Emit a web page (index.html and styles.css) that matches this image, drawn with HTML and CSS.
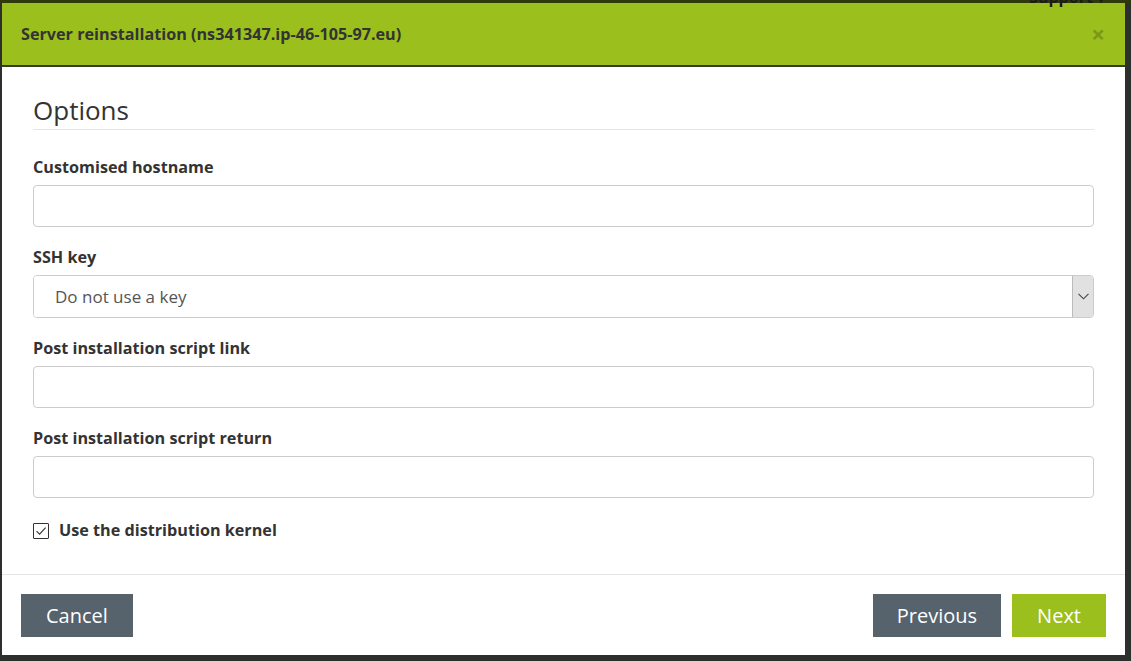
FILE: index.html
```html
<!DOCTYPE html>
<html lang="en">
<head>
<meta charset="utf-8">
<title>Server reinstallation</title>
<link rel="stylesheet" href="styles.css">
</head>
<body>
<div class="topstrip"><span class="support">Support &#9662;</span></div>
<div class="modal">
  <div class="modal-header">
    <h4 class="modal-title">Server reinstallation (ns341347.ip-46-105-97.eu)</h4>
    <span class="close">&times;</span>
  </div>
  <div class="modal-body">
    <h3 class="section-title">Options</h3>
    <div class="form-group">
      <label class="label">Customised hostname</label>
      <input class="input" type="text">
    </div>
    <div class="form-group">
      <label class="label">SSH key</label>
      <div class="select-wrap">
        <select class="select"><option>Do not use a key</option></select>
        <span class="select-arrow">
          <svg width="11" height="7" viewBox="0 0 11 7"><path d="M0.5 0.8 L5.5 5.8 L10.5 0.8" fill="none" stroke="#444" stroke-width="1.1"/></svg>
        </span>
      </div>
    </div>
    <div class="form-group">
      <label class="label">Post installation script link</label>
      <input class="input" type="text">
    </div>
    <div class="form-group">
      <label class="label">Post installation script return</label>
      <input class="input" type="text">
    </div>
    <div class="check-row">
      <span class="checkbox">
        <svg width="14" height="14" viewBox="0 0 14 14"><path d="M2.5 7.2 L5.6 10.2 L11.6 3.6" fill="none" stroke="#333" stroke-width="1.1"/></svg>
      </span>
      <span class="check-label">Use the distribution kernel</span>
    </div>
  </div>
  <div class="modal-footer">
    <button class="btn btn-grey">Cancel</button>
    <div class="footer-right">
      <button class="btn btn-grey btn-prev">Previous</button>
      <button class="btn btn-green">Next</button>
    </div>
  </div>
</div>
</body>
</html>
```

FILE: styles.css
```css
html, body {
  margin: 0;
  padding: 0;
}
body {
  background: #2c2f2c;
  font-family: "Open Sans", "Liberation Sans", sans-serif;
  color: #333;
  height: 661px;
  overflow: hidden;
}
.topstrip {
  height: 3px;
  background: #2e3a0c;
  position: relative;
}
.support {
  position: absolute;
  right: 26px;
  top: -13px;
  font-size: 16px;
  line-height: 20px;
  font-weight: 700;
  color: #1a1a1a;
  white-space: nowrap;
}
.modal {
  margin-left: 2px;
  width: 1123px;
  background: #fff;
  display: flex;
  flex-direction: column;
}
.modal-header {
  height: 62px;
  background: #9bbf1d;
  border-bottom: 2px solid #353a2c;
  display: flex;
  align-items: center;
  justify-content: space-between;
  padding: 0 20px 0 19px;
}
.modal-title {
  margin: 0;
  font-size: 16.2px;
  line-height: 22px;
  font-weight: 700;
  color: #333;
}
.close {
  font-size: 24px;
  font-weight: 700;
  line-height: 22px;
  color: #7b9819;
}
.modal-body {
  padding: 27px 31px 34px 31px;
  display: flex;
  flex-direction: column;
}
.section-title {
  margin: 0 0 26px 0;
  font-size: 26px;
  line-height: 32px;
  font-weight: 400;
  color: #333;
  padding-bottom: 3px;
  border-bottom: 1px solid #e5e5e5;
}
.form-group {
  display: flex;
  flex-direction: column;
  margin-bottom: 19px;
}
.label {
  font-size: 16.2px;
  line-height: 21px;
  font-weight: 700;
  color: #333;
  padding-top: 1px;
  margin-bottom: 7px;
}
.input {
  box-sizing: border-box;
  height: 42px;
  border: 1px solid #ccc;
  border-radius: 4px;
  background: #fff;
  font-family: inherit;
  font-size: 17px;
  padding: 0 12px;
  margin: 0;
}
.select-wrap {
  box-sizing: border-box;
  height: 43px;
  border: 1px solid #ccc;
  border-radius: 4px;
  display: flex;
  overflow: hidden;
  background: #fff;
}
.select {
  flex: 1;
  appearance: none;
  -webkit-appearance: none;
  border: none;
  background: #fff;
  font-family: inherit;
  font-size: 17px;
  color: #555;
  padding: 0 0 0 21px;
  margin: 0;
  outline: none;
}
.select-arrow {
  width: 20px;
  background: #e1e1e1;
  border-left: 1px solid #bbb;
  display: flex;
  align-items: center;
  justify-content: center;
}
.check-row {
  display: flex;
  align-items: center;
  gap: 10px;
  margin-top: 3px;
  margin-bottom: -1px;
}
.checkbox {
  box-sizing: border-box;
  width: 16px;
  height: 16px;
  border: 1px solid #333;
  border-radius: 1px;
  display: flex;
  align-items: center;
  justify-content: center;
}
.check-label {
  font-size: 16.2px;
  line-height: 21px;
  font-weight: 700;
  color: #333;
}
.modal-footer {
  border-top: 1px solid #e5e5e5;
  padding: 19px 19px 18px 19px;
  display: flex;
  justify-content: space-between;
  align-items: center;
}
.footer-right {
  display: flex;
  gap: 11px;
}
.btn {
  height: 43px;
  border: none;
  border-radius: 0;
  padding: 0 25px;
  font-family: inherit;
  font-size: 20px;
  color: #fff;
  cursor: pointer;
}
.btn-prev {
  padding: 0 24px;
}
.btn-grey {
  background: #56636d;
}
.btn-green {
  background: #9bbf1d;
}
```
